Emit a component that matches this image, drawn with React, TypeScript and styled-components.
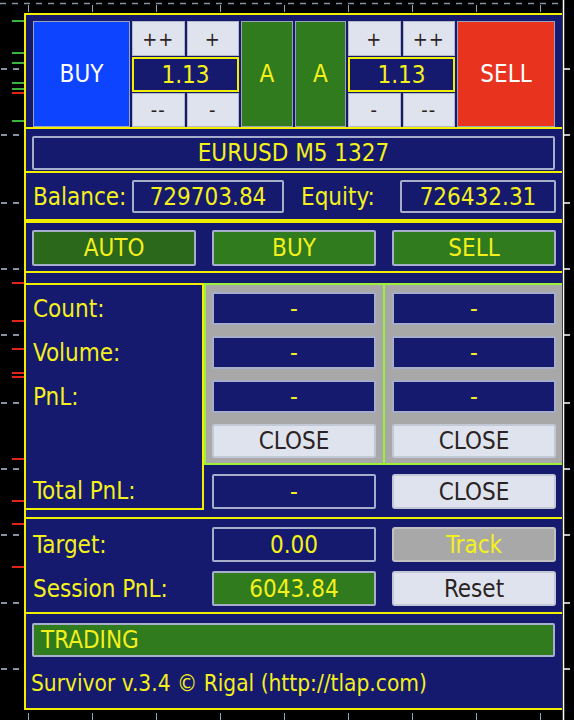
import styled, { createGlobalStyle } from "styled-components";

const COLOR = {
  NAVY: "#151a6e",
  LINE: "#f2ee00",
  TEXT: "#f4f01c",
  FRAME: "#a7aecb",
  LIGHT: "#dfe3ee",
  LIGHT_FRAME: "#c3c8d6",
  DARK_TEXT: "#2b2323",
  GREEN: "#2f7b1e",
  GREEN_DARK: "#2b681b",
  GRAY: "#a8a8a8",
  CHARTREUSE: "#9cf03a",
  BLUE: "#0c44ff",
  RED: "#e8331f",
};

const GlobalStyle = createGlobalStyle`
  html, body {
    margin: 0;
    padding: 0;
    background: #000;
  }
  body {
    font-family: "DejaVu Sans Condensed", "DejaVu Sans", "Liberation Sans", sans-serif;
    font-stretch: condensed;
  }
`;

const Screen = styled.div`
  position: relative;
  width: 574px;
  height: 720px;
  padding: 13px 0 0 24px;
  box-sizing: border-box;
  background: #000;
  overflow: hidden;
`;

const ChartLayer = styled.svg`
  position: absolute;
  inset: 0;
`;

const Panel = styled.div`
  position: relative;
  width: 538px;
  background: ${COLOR.NAVY};
  border-left: 2px solid ${COLOR.LINE};
  border-bottom: 2px solid ${COLOR.LINE};
  box-sizing: border-box;
  font-size: 24px;
  color: ${COLOR.TEXT};
`;

const Section = styled.div<{ $border?: number; $pad: string }>`
  border-top: ${({ $border }) => $border ?? 2}px solid ${COLOR.LINE};
  padding: ${({ $pad }) => $pad};
`;

/* top trade block */
const TradeGrid = styled.div`
  display: grid;
  grid-template-columns: 97px 107px 52px 51px 107px 98px;
  column-gap: 2px;
  height: 106px;
`;

const BigButton = styled.div<{ $bg: string }>`
  display: flex;
  align-items: center;
  justify-content: center;
  background: ${({ $bg }) => $bg};
  border: 1px solid #9aa3bb;
  color: #fff;
`;

const ModeButton = styled(BigButton)`
  color: ${COLOR.TEXT};
`;

const LotGroup = styled.div`
  display: grid;
  grid-template-columns: 1fr 1fr;
  grid-template-rows: 35px 35px 34px;
  gap: 1px 2px;
`;

const StepKey = styled.div`
  display: flex;
  align-items: center;
  justify-content: center;
  background: ${COLOR.LIGHT};
  border: 1px solid #b2b8c6;
  color: ${COLOR.DARK_TEXT};
  font-size: 20px;
  letter-spacing: 1px;
`;

const LotField = styled.div`
  grid-column: 1 / 3;
  display: flex;
  align-items: center;
  justify-content: center;
  background: ${COLOR.NAVY};
  border: 2px solid ${COLOR.LINE};
`;

/* shared boxes */
const Box = styled.div<{ $bg?: string; $align?: string }>`
  display: flex;
  align-items: center;
  justify-content: ${({ $align }) => $align ?? "center"};
  padding: 0 7px;
  box-sizing: border-box;
  background: ${({ $bg }) => $bg ?? COLOR.NAVY};
  border: 2px solid ${COLOR.FRAME};
  border-radius: 2px;
  white-space: nowrap;
`;

const LightButton = styled(Box)`
  background: ${COLOR.LIGHT};
  border-color: ${COLOR.LIGHT_FRAME};
  border-radius: 3px;
  color: ${COLOR.DARK_TEXT};
`;

const Label = styled.div`
  display: flex;
  align-items: center;
  white-space: nowrap;
`;

const SymbolBox = styled(Box)`
  height: 34px;
`;

const AccountRow = styled.div`
  display: grid;
  grid-template-columns: 99px 152px 116px 156px;
  height: 33px;
`;

const EquityLabel = styled(Label)`
  padding-left: 17px;
`;

const ThreeCols = styled.div<{ $rows: string; $gap: number }>`
  display: grid;
  grid-template-columns: 164px 164px 164px;
  grid-template-rows: ${({ $rows }) => $rows};
  column-gap: 16px;
  row-gap: ${({ $gap }) => $gap}px;
`;

const RiskLabel = styled(Label)`
  padding-left: 1px;
`;

/* positions block */
const PositionsGrid = styled.div`
  display: grid;
  grid-template-columns: 180px 358px;
  height: 227px;
  margin-left: -2px;
`;

const LabelBox = styled.div`
  display: flex;
  flex-direction: column;
  gap: 11px;
  padding: 7px 0 0 7px;
  border: 2px solid ${COLOR.LINE};
`;

const RowLabel = styled(Label)<{ $h: number }>`
  height: ${({ $h }) => $h}px;
`;

const TotalLabel = styled(RowLabel)`
  margin-top: auto;
`;

const RightStack = styled.div`
  display: flex;
  flex-direction: column;
`;

const GrayBox = styled.div`
  display: grid;
  grid-template-columns: 177px 177px;
  column-gap: 2px;
  height: 182px;
  box-sizing: border-box;
  background: ${COLOR.CHARTREUSE};
  border: 2px solid ${COLOR.CHARTREUSE};
  border-right: none;
`;

const GrayCol = styled.div<{ $pl: number }>`
  display: grid;
  grid-template-rows: 33px 33px 33px 34px;
  row-gap: 11px;
  padding: 7px 0 0 ${({ $pl }) => $pl}px;
  background: ${COLOR.GRAY};
`;

const SideField = styled(Box)`
  width: 164px;
`;

const SideClose = styled(LightButton)`
  width: 164px;
`;

const TotalRow = styled.div`
  display: grid;
  grid-template-columns: 164px 164px;
  column-gap: 16px;
  height: 35px;
  margin: 9px 0 0 8px;
`;

const TrackButton = styled(Box)`
  background: ${COLOR.GRAY};
  border-color: #c0c0c0;
  border-radius: 3px;
  color: ${COLOR.TEXT};
`;

const StatusBar = styled(Box)`
  height: 34px;
  padding-left: 7px;
`;

const Footer = styled.div`
  height: 51px;
  display: flex;
  align-items: center;
  margin-left: -1px;
  font-size: 22.5px;
  white-space: nowrap;
`;

const TICK_Y = [69, 135, 203, 269, 335, 403, 469, 535, 603, 669];
const GREEN_MARKS = [21, 53, 63, 83, 89, 121];
const RED_MARKS = [93, 283, 321, 349, 373, 377, 459, 501, 524, 567];
const TIME_X = [28, 92, 156, 220, 284, 348, 412, 476, 540];

const Chart = () => (
  <ChartLayer width={574} height={720}>
    <line x1={0} y1={3.5} x2={560} y2={3.5} stroke="#8593a3" strokeWidth={1.5} strokeDasharray="6 6" />
    {TIME_X.map((x) => (
      <g key={x} stroke="#9aa6b4">
        <line x1={x + 0.5} y1={5} x2={x + 0.5} y2={12} />
        <line x1={x + 0.5} y1={713} x2={x + 0.5} y2={720} />
      </g>
    ))}
    <line x1={563.5} y1={0} x2={563.5} y2={720} stroke="#fff" strokeWidth={1.5} />
    {TICK_Y.map((y) => (
      <g key={y}>
        <line x1={564} y1={y} x2={570} y2={y} stroke="#fff" strokeWidth={1.5} />
        <line x1={1} y1={y} x2={19} y2={y} stroke="#8593a3" strokeWidth={2} strokeDasharray="6 6" />
      </g>
    ))}
    {GREEN_MARKS.map((y) => (
      <line key={`g${y}`} x1={12} y1={y} x2={24} y2={y} stroke="#3cb43c" strokeWidth={2} />
    ))}
    {RED_MARKS.map((y) => (
      <line key={`r${y}`} x1={12} y1={y} x2={24} y2={y} stroke="#e0241c" strokeWidth={2} />
    ))}
  </ChartLayer>
);

const LotControl = ({ mirrored }: { mirrored?: boolean }) => {
  const up = mirrored ? ["+", "++"] : ["++", "+"];
  const down = mirrored ? ["-", "--"] : ["--", "-"];

  return (
    <LotGroup>
      {up.map((key) => (
        <StepKey key={key}>{key}</StepKey>
      ))}
      <LotField>1.13</LotField>
      {down.map((key) => (
        <StepKey key={key}>{key}</StepKey>
      ))}
    </LotGroup>
  );
};

const SideColumn = ({ pl }: { pl: number }) => (
  <GrayCol $pl={pl}>
    <SideField>-</SideField>
    <SideField>-</SideField>
    <SideField>-</SideField>
    <SideClose>CLOSE</SideClose>
  </GrayCol>
);

const App = () => {
  return (
    <Screen>
      <GlobalStyle />
      <Chart />
      <Panel>
        <Section $pad="6px 7px 0 7px">
          <TradeGrid>
            <BigButton $bg={COLOR.BLUE}>BUY</BigButton>
            <LotControl />
            <ModeButton $bg={COLOR.GREEN}>A</ModeButton>
            <ModeButton $bg={COLOR.GREEN}>A</ModeButton>
            <LotControl mirrored />
            <BigButton $bg={COLOR.RED}>SELL</BigButton>
          </TradeGrid>
        </Section>

        <Section $pad="7px 7px 1px 6px">
          <SymbolBox>EURUSD M5 1327</SymbolBox>
        </Section>

        <Section $pad="7px 6px 6px 7px">
          <AccountRow>
            <Label>Balance:</Label>
            <Box>729703.84</Box>
            <EquityLabel>Equity:</EquityLabel>
            <Box>726432.31</Box>
          </AccountRow>
        </Section>

        <Section $border={4} $pad="7px 6px 5px 6px">
          <ThreeCols $rows="36px" $gap={0}>
            <Box $bg={COLOR.GREEN_DARK}>AUTO</Box>
            <Box $bg={COLOR.GREEN}>BUY</Box>
            <Box $bg={COLOR.GREEN}>SELL</Box>
          </ThreeCols>
        </Section>

        <Section $pad="10px 0 7px 0">
          <PositionsGrid>
            <LabelBox>
              <RowLabel $h={33}>Count:</RowLabel>
              <RowLabel $h={33}>Volume:</RowLabel>
              <RowLabel $h={33}>PnL:</RowLabel>
              <TotalLabel $h={34}>Total PnL:</TotalLabel>
            </LabelBox>
            <RightStack>
              <GrayBox>
                <SideColumn pl={6} />
                <SideColumn pl={7} />
              </GrayBox>
              <TotalRow>
                <Box>-</Box>
                <LightButton>CLOSE</LightButton>
              </TotalRow>
            </RightStack>
          </PositionsGrid>
        </Section>

        <Section $pad="8px 6px 6px 6px">
          <ThreeCols $rows="35px 35px" $gap={9}>
            <RiskLabel>Target:</RiskLabel>
            <Box>0.00</Box>
            <TrackButton>Track</TrackButton>
            <RiskLabel>Session PnL:</RiskLabel>
            <Box $bg={COLOR.GREEN}>6043.84</Box>
            <LightButton>Reset</LightButton>
          </ThreeCols>
        </Section>

        <Section $pad="9px 7px 0 6px">
          <StatusBar $bg={COLOR.GREEN} $align="flex-start">
            TRADING
          </StatusBar>
          <Footer>Survivor v.3.4 © Rigal (http://tlap.com)</Footer>
        </Section>
      </Panel>
    </Screen>
  );
};

export default App;
